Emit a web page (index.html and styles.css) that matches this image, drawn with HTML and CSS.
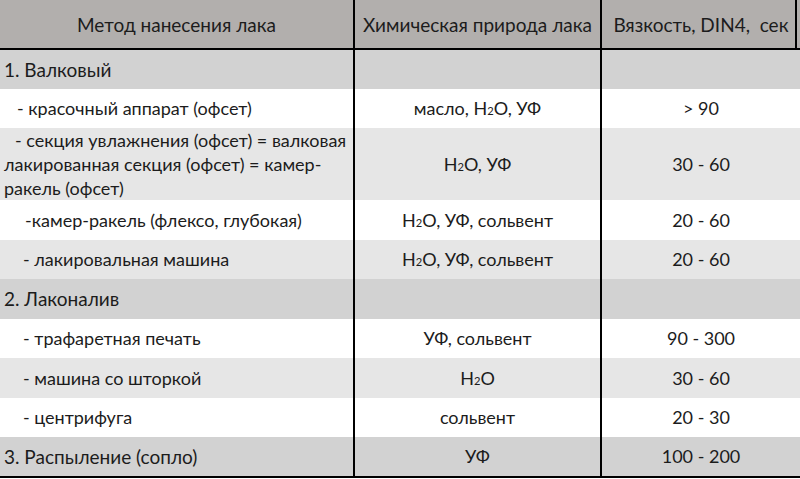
FILE: index.html
```html
<!DOCTYPE html>
<html lang="ru">
<head>
<meta charset="utf-8">
<link rel="stylesheet" href="styles.css">
</head>
<body>
<table class="grid">
  <colgroup>
    <col class="c1"><col class="c2"><col class="c3">
  </colgroup>
  <thead>
    <tr class="head">
      <th>Метод нанесения лака</th>
      <th>Химическая природа лака</th>
      <th>Вязкость, DIN4,&nbsp; сек</th>
    </tr>
  </thead>
  <tbody>
    <tr class="sec">
      <td class="title">1. Валковый</td><td></td><td></td>
    </tr>
    <tr class="white">
      <td class="item ind1">- красочный аппарат (офсет)</td>
      <td class="val">масло, H<sub>2</sub>O, УФ</td>
      <td class="val">&gt; 90</td>
    </tr>
    <tr class="light tall">
      <td class="item wrap"><span class="ind1s">- секция увлажнения (офсет) = валковая</span><br>лакированная секция (офсет) = камер-<br>ракель (офсет)</td>
      <td class="val">H<sub>2</sub>O, УФ</td>
      <td class="val">30 - 60</td>
    </tr>
    <tr class="white">
      <td class="item ind3">-камер-ракель (флексо, глубокая)</td>
      <td class="val">H<sub>2</sub>O, УФ, сольвент</td>
      <td class="val">20 - 60</td>
    </tr>
    <tr class="light">
      <td class="item ind2">- лакировальная машина</td>
      <td class="val">H<sub>2</sub>O, УФ, сольвент</td>
      <td class="val">20 - 60</td>
    </tr>
    <tr class="sec">
      <td class="title">2. Лаконалив</td><td></td><td></td>
    </tr>
    <tr class="white">
      <td class="item ind2">- трафаретная печать</td>
      <td class="val">УФ, сольвент</td>
      <td class="val">90 - 300</td>
    </tr>
    <tr class="light">
      <td class="item ind2">- машина со шторкой</td>
      <td class="val">H<sub>2</sub>O</td>
      <td class="val">30 - 60</td>
    </tr>
    <tr class="white">
      <td class="item ind2">- центрифуга</td>
      <td class="val">сольвент</td>
      <td class="val">20 - 30</td>
    </tr>
    <tr class="sec last">
      <td class="title">3. Распыление (сопло)</td>
      <td class="val">УФ</td>
      <td class="val">100 - 200</td>
    </tr>
  </tbody>
</table>
</body>
</html>
```

FILE: styles.css
```css
html, body {
  margin: 0;
  padding: 0;
  background: #ffffff;
}

body {
  width: 800px;
  height: 479px;
  overflow: hidden;
  font-family: "Lato", "Liberation Sans", sans-serif;
  color: #1c1c1c;
}

.grid {
  width: 800px;
  border-collapse: collapse;
  table-layout: fixed;
}

.c1 { width: 354px; }
.c2 { width: 247px; }
.c3 { width: 199px; }

.grid th,
.grid td {
  padding: 0 4px;
  vertical-align: middle;
  white-space: nowrap;
}

.grid th + th,
.grid td + td {
  border-left: 2px solid #000;
}

.head th {
  height: 48px;
  background: #b2afad;
  font-weight: normal;
  font-size: 19px;
  text-align: center;
  border-bottom: 2px solid #000;
}

.head th:last-child {
  box-shadow: inset -3px 0 0 #b2afad, inset -5px 0 0 #000;
}

.grid tbody tr {
  height: 39.5px;
}

.grid tbody tr.tall {
  height: 72px;
}

.sec { background: #d2d2d2; }
.light { background: #e6e6e6; }
.white { background: #ffffff; }

.last td {
  border-bottom: 2px solid #000;
}

.grid td.title {
  font-size: 19px;
  padding-left: 4px;
}

.grid td.item {
  font-size: 18px;
}

.grid td.wrap {
  line-height: 24px;
}

.grid td.ind1 { padding-left: 17px; }
.ind1s { padding-left: 11px; }
.grid td.ind2 { padding-left: 23px; }
.grid td.ind3 { padding-left: 25px; }

.grid td.val {
  font-size: 18px;
  text-align: center;
}

sub {
  font-size: 0.62em;
  vertical-align: 0;
  line-height: 0;
}
```
